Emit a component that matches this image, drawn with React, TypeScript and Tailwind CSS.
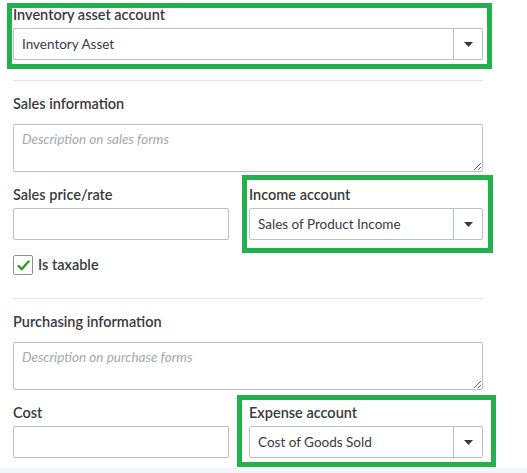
import type { ReactNode } from "react";

const font = { fontFamily: "Lato, 'Open Sans', Arial, sans-serif" };

function Label({ children }: { children: ReactNode }) {
  return <div className="h-5 text-[14.5px] leading-5 font-semibold text-[#393a3d]">{children}</div>;
}

function Select({ value }: { value: string }) {
  return (
    <div className="mt-[3px] flex h-8 items-stretch rounded-[2px] border border-[#babec5] bg-white">
      <div className="flex flex-1 items-center px-2 text-[13.5px] text-[#393a3d]">{value}</div>
      <div className="flex w-[29px] items-center justify-center border-l border-[#babec5]">
        <svg width="9" height="5" viewBox="0 0 9 5">
          <path d="M0 0h9L4.5 5z" fill="#393a3d" />
        </svg>
      </div>
    </div>
  );
}

function TextInput() {
  return <input className="mt-[3px] block h-8 w-full rounded-[2px] border border-[#babec5] bg-white px-2 text-[13.5px] outline-none" />;
}

function Description({ placeholder }: { placeholder: string }) {
  return (
    <textarea
      placeholder={placeholder}
      className="mt-[10px] block h-12 w-full resize-y rounded-[2px] border border-[#babec5] bg-white px-2 py-1 text-[13.5px] italic text-[#393a3d] outline-none placeholder:text-[#a5a8ae]"
    />
  );
}

function Highlight({ className }: { className: string }) {
  return <div className={"pointer-events-none absolute border-[5px] border-[#22b14c] " + className} />;
}

export default function App() {
  return (
    <div className="relative h-[473px] w-[527px] overflow-hidden bg-white" style={font}>
      <div className="w-[470px] pl-[13px] pt-[5px] box-content">
        <div className="relative">
          <Label>Inventory asset account</Label>
          <Select value="Inventory Asset" />
          <Highlight className="-left-[6px] -top-[2px] -right-[9px] -bottom-[9px]" />
        </div>

        <div className="mt-5 h-px bg-[#e3e5e8]" />

        <div className="mt-[13px]">
          <Label>Sales information</Label>
          <Description placeholder="Description on sales forms" />
        </div>

        <div className="mt-[13px] grid grid-cols-[216px_1fr] gap-x-5">
          <div>
            <Label>Sales price/rate</Label>
            <TextInput />
          </div>
          <div className="relative">
            <Label>Income account</Label>
            <Select value="Sales of Product Income" />
            <Highlight className="-left-[7px] -top-[10px] -right-[10px] -bottom-[13px]" />
          </div>
        </div>

        <label className="mt-[15px] flex h-5 items-center gap-[5px]">
          <span className="flex h-5 w-5 items-center justify-center rounded-[2px] border border-[#8d9096] bg-white">
            <svg width="13" height="11" viewBox="0 0 13 11">
              <path d="M1.5 6l3.2 3.2L11.5 1.5" fill="none" stroke="#2ca01c" strokeWidth="2.4" strokeLinecap="round" strokeLinejoin="round" />
            </svg>
          </span>
          <span className="text-[14.5px] font-semibold text-[#393a3d]">Is taxable</span>
        </label>

        <div className="mt-[23px] h-px bg-[#e3e5e8]" />

        <div className="mt-[13px]">
          <Label>Purchasing information</Label>
          <Description placeholder="Description on purchase forms" />
        </div>

        <div className="mt-[13px] grid grid-cols-[216px_1fr] gap-x-5">
          <div>
            <Label>Cost</Label>
            <TextInput />
          </div>
          <div className="relative">
            <Label>Expense account</Label>
            <Select value="Cost of Goods Sold" />
            <Highlight className="-left-[12px] -top-[8px] -right-[13px] -bottom-[9px]" />
          </div>
        </div>
      </div>
      <div className="absolute bottom-0 left-0 h-[5px] w-full bg-[#f4f5f8]" />
    </div>
  );
}
